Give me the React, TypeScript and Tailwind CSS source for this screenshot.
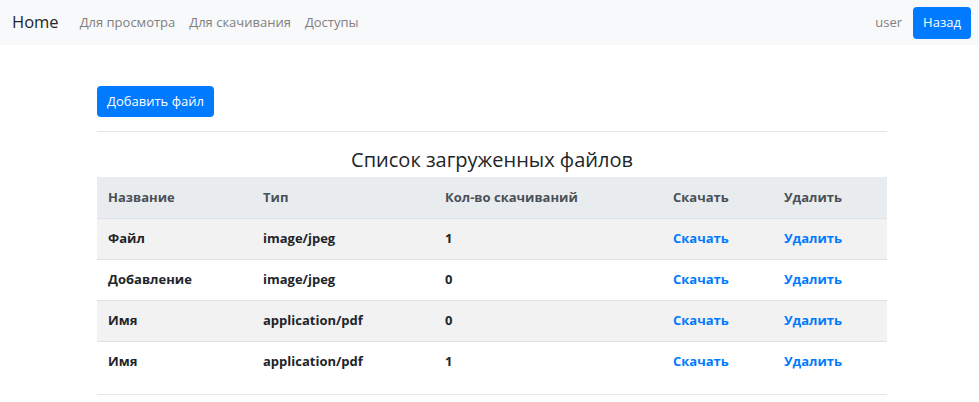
import { useMemo } from 'react'

type FileRow = {
  id: number
  name: string
  type: string
  downloads: number
}

const files: FileRow[] = [
  { id: 1, name: 'Файл', type: 'image/jpeg', downloads: 1 },
  { id: 2, name: 'Добавление', type: 'image/jpeg', downloads: 0 },
  { id: 3, name: 'Имя', type: 'application/pdf', downloads: 0 },
  { id: 4, name: 'Имя', type: 'application/pdf', downloads: 1 },
]

const navLinks = ['Для просмотра', 'Для скачивания', 'Доступы']

function App() {
  const rows = useMemo(() => files, [])

  return (
    <div className="min-h-screen bg-white text-[#212529] font-['Segoe_UI','Open_Sans',sans-serif]">
      {/* Navbar */}
      <nav className="h-[45px] bg-[#f8f9fa] flex items-center pl-3 pr-2">
        <a className="text-[16.5px] text-[#212529] mr-[21px]">Home</a>
        <div className="flex gap-[14px] text-[13px] text-[#808080]">
          {navLinks.map(link => (
            <a key={link}>{link}</a>
          ))}
        </div>
        <div className="ml-auto flex items-center gap-[11px]">
          <span className="text-[13px] text-[#808080]">user</span>
          <button className="h-8 w-[58px] rounded bg-[#007bff] text-white text-[13px]">Назад</button>
        </div>
      </nav>

      {/* Content */}
      <div className="w-[790px] ml-[97px] pt-[41px]">
        <button className="h-[31px] w-[117px] rounded bg-[#007bff] text-white text-[13px]">
          Добавить файл
        </button>

        <hr className="mt-[14px] border-[#e6e6e6]" />

        <h5 className="text-center text-[20px] font-medium mt-[16px] mb-[5px] leading-[24px]">
          Список загруженных файлов
        </h5>

        {/* Files table */}
        <table className="w-full text-[13px] font-bold border-collapse">
          <thead>
            <tr className="bg-[#e9ecef] text-[#495057] h-[41px]">
              <th className="w-[154px] text-left pl-[11px]">Название</th>
              <th className="w-[182px] text-left pl-[12px]">Тип</th>
              <th className="w-[228px] text-left pl-[12px]">Кол-во скачиваний</th>
              <th className="w-[111px] text-left pl-[12px]">Скачать</th>
              <th className="text-left pl-[12px]">Удалить</th>
            </tr>
          </thead>
          <tbody>
            {rows.map((file, i) => (
              <tr
                key={file.id}
                className={`h-[41px] border-t border-[#dee2e6] ${i % 2 === 0 ? 'bg-[#f2f2f2]' : 'bg-white'}`}
              >
                <td className="pl-[11px]">{file.name}</td>
                <td className="pl-[12px]">{file.type}</td>
                <td className="pl-[12px]">{file.downloads}</td>
                <td className="pl-[12px]">
                  <a className="text-[#007bff]">Скачать</a>
                </td>
                <td className="pl-[12px]">
                  <a className="text-[#007bff]">Удалить</a>
                </td>
              </tr>
            ))}
          </tbody>
        </table>

        <hr className="mt-[12px] border-[#e6e6e6]" />
      </div>
    </div>
  )
}

export default App
